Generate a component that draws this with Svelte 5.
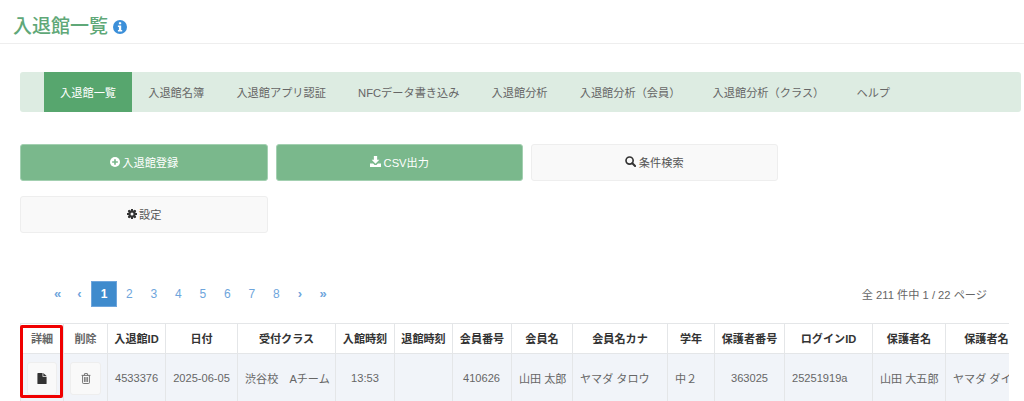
<script>
  const navItems = ['入退館一覧', '入退館名簿', '入退館アプリ認証', 'NFCデータ書き込み', '入退館分析', '入退館分析（会員）', '入退館分析（クラス）', 'ヘルプ'];
  const pages = ['1', '2', '3', '4', '5', '6', '7', '8'];
  const columns = [
    { w: 43, t: '詳細', muted: true },
    { w: 44, t: '削除', muted: true },
    { w: 58, t: '入退館ID', v: '4533376', a: 'c' },
    { w: 72, t: '日付', v: '2025-06-05', a: 'c' },
    { w: 98, t: '受付クラス', v: '渋谷校　Aチーム', a: 'c' },
    { w: 59, t: '入館時刻', v: '13:53', a: 'c' },
    { w: 58, t: '退館時刻', v: '', a: 'c' },
    { w: 59, t: '会員番号', v: '410626', a: 'r' },
    { w: 61, t: '会員名', v: '山田 太郎', a: 'c' },
    { w: 95, t: '会員名カナ', v: 'ヤマダ タロウ', a: 'l' },
    { w: 47, t: '学年', v: '中２', a: 'l' },
    { w: 70, t: '保護者番号', v: '363025', a: 'c' },
    { w: 88, t: 'ログインID', v: '25251919a', a: 'l' },
    { w: 73, t: '保護者名', v: '山田 大五郎', a: 'c' },
    { w: 104, t: '保護者名カナ', v: 'ヤマダ ダイゴロウ', a: 'l' }
  ];
  const gearTeeth = [0, 45, 90, 135, 180, 225, 270, 315];
</script>

<div class="page">
  <header class="head">
    <h1>入退館一覧</h1>
    <svg class="info" viewBox="0 0 14 14" width="14" height="14" aria-hidden="true">
      <circle cx="7" cy="7" r="7" fill="#3b8fd9" />
      <rect x="5.9" y="2.3" width="2.3" height="2" rx=".3" fill="#fff" />
      <path d="M4.9 5.5h3.3v4.4h1v1.5H4.9V9.9h1V7H4.9z" fill="#fff" />
    </svg>
  </header>

  <main class="content">
    <nav class="nav">
      {#each navItems as item, i}
        <span class="tab" class:active={i === 0}>{item}</span>
      {/each}
    </nav>

    <div class="buttons">
      <div class="btn green">
        <svg viewBox="0 0 12 12" width="10" height="10" aria-hidden="true">
          <circle cx="6" cy="6" r="6" fill="#fff" />
          <path d="M5 2.6h2V5h2.4v2H7v2.4H5V7H2.6V5H5z" fill="#7ab88c" />
        </svg>
        <span>入退館登録</span>
      </div>
      <div class="btn green">
        <svg viewBox="0 0 12 12" width="11" height="11" aria-hidden="true">
          <path d="M4.2 0h3.6v4.2h2.4L6 8.4 1.8 4.2h2.4z" fill="#fff" />
          <path d="M0 8.2h3.4L5 9.8h2l1.6-1.6H12V12H0z" fill="#fff" />
        </svg>
        <span>CSV出力</span>
      </div>
      <div class="btn plain">
        <svg viewBox="0 0 12 12" width="11" height="11" aria-hidden="true">
          <circle cx="5" cy="5" r="3.9" fill="none" stroke="#333" stroke-width="1.8" />
          <path d="M8 8l3 3" stroke="#333" stroke-width="2.2" stroke-linecap="round" />
        </svg>
        <span>条件検索</span>
      </div>
      <div class="btn plain first">
        <svg viewBox="0 0 12 12" width="10" height="10" aria-hidden="true">
          {#each gearTeeth as deg}
            <rect x="4.8" y="0" width="2.4" height="12" rx=".3" fill="#333" transform="rotate({deg} 6 6)" />
          {/each}
          <circle cx="6" cy="6" r="4.4" fill="#333" />
          <circle cx="6" cy="6" r="1.8" fill="#f9f9f9" />
        </svg>
        <span>設定</span>
      </div>
    </div>

    <div class="pager-row">
      <div class="pager">
        <span class="pg edge">«</span>
        <span class="pg edge">‹</span>
        {#each pages as p, i}
          <span class="pg" class:current={i === 0}>{p}</span>
        {/each}
        <span class="pg edge">›</span>
        <span class="pg edge">»</span>
      </div>
      <div class="count">全 211 件中 1 / 22 ページ</div>
    </div>

    <div class="table-wrap">
      <table>
        <colgroup>
          {#each columns as c}
            <col style="width:{c.w}px" />
          {/each}
        </colgroup>
        <thead>
          <tr>
            {#each columns as c}
              <th class:muted={c.muted}>{c.t}</th>
            {/each}
          </tr>
        </thead>
        <tbody>
          <tr>
            <td class="act">
              <span class="icon-btn">
                <svg viewBox="0 0 10 12" width="10" height="11" aria-hidden="true">
                  <path d="M0 .6C0 .3.3 0 .6 0H5.6v4h4.4v7.4c0 .3-.3.6-.6.6H.6c-.3 0-.6-.3-.6-.6z" fill="#333" />
                  <path d="M6.4.1 10 3.3H6.4z" fill="#333" />
                </svg>
              </span>
            </td>
            <td class="act">
              <span class="icon-btn wide">
                <svg viewBox="0 0 10 12" width="10" height="11" aria-hidden="true">
                  <path d="M.2 2.6h9.6M3.3 2.4V1.2q0-.7.7-.7h2q.7 0 .7.7v1.2M1.3 2.8v7.8q0 .9.9.9h5.6q.9 0 .9-.9V2.8M3.5 4.4v5.4M5 4.4v5.4M6.5 4.4v5.4" fill="none" stroke="#666" stroke-width="1" />
                </svg>
              </span>
            </td>
            {#each columns.slice(2) as c}
              <td class={c.a}>{c.v}</td>
            {/each}
          </tr>
        </tbody>
      </table>
      <div class="highlight"></div>
    </div>
  </main>
</div>

<style>
  :global(body) {
    margin: 0;
    background: #fff;
  }
  .page {
    height: 401px;
    overflow: hidden;
    font-family: "Liberation Sans", "Noto Sans CJK JP", sans-serif;
    font-size: 11px;
    color: #666;
  }
  .head {
    height: 33px;
    padding: 10px 0 0 13px;
    border-bottom: 1px solid #eeeeee;
    display: flex;
    align-items: center;
    gap: 5px;
  }
  h1 {
    margin: 0;
    font-size: 19px;
    font-weight: 500;
    line-height: 26px;
    color: #5fa878;
  }
  .content {
    padding: 28px 3px 0 20px;
  }
  .nav {
    height: 40px;
    background: #ddece2;
    border-radius: 3px;
    padding-left: 24px;
    display: flex;
  }
  .tab {
    display: flex;
    align-items: center;
    padding: 0 16.1px 1px;
    font-size: 11.2px;
    color: #666;
    white-space: nowrap;
  }
  .tab.active {
    background: #57a66e;
    color: #fff;
  }
  .buttons {
    margin-top: 32px;
    display: grid;
    grid-template-columns: 248px 247px 247px;
    column-gap: 8px;
    row-gap: 15px;
  }
  .btn {
    height: 37px;
    box-sizing: border-box;
    padding-bottom: 2px;
    border-radius: 3px;
    border: 1px solid;
    display: flex;
    align-items: center;
    justify-content: center;
    gap: 2.5px;
    font-size: 11.2px;
  }
  .btn.green {
    background: #7ab88c;
    border-color: #a3d0b1;
    color: #fff;
  }
  .btn.plain {
    background: #f9f9f9;
    border-color: #eeeeee;
    color: #555;
  }
  .pager-row {
    margin-top: 48px;
    height: 26px;
    display: flex;
    align-items: center;
    justify-content: space-between;
    padding: 0 34px 0 25px;
  }
  .pager {
    display: flex;
    align-items: center;
  }
  .pg {
    box-sizing: border-box;
    width: 24.5px;
    height: 26px;
    display: flex;
    align-items: center;
    justify-content: center;
    font-size: 12px;
    color: #6ea5dc;
  }
  .pg.edge {
    width: 23px;
    font-size: 13px;
    font-weight: 700;
    padding-bottom: 1px;
  }
  .pg.edge:first-child {
    padding-left: 2px;
  }
  .pg.current {
    width: 26px;
    background: #3f8bcd;
    border: 1px solid #6ea5dc;
    color: #fff;
    font-weight: 700;
  }
  .count {
    font-size: 11.2px;
    color: #666;
  }
  .table-wrap {
    position: relative;
    margin-top: 16px;
    width: 989px;
    overflow: hidden;
  }
  table {
    table-layout: fixed;
    border-collapse: collapse;
    width: 1029px;
    font-size: 11.1px;
  }
  th, td {
    border: 1px solid #e4e6e8;
    white-space: nowrap;
    overflow: hidden;
    padding: 0 7px 1px;
  }
  th {
    height: 30px;
    box-sizing: border-box;
    color: #333;
    font-weight: 700;
    background: #fff;
    text-align: center;
    padding: 0 0 2px;
  }
  th.muted {
    color: #666;
  }
  td {
    height: 48px;
    background: #f1f4f9;
    color: #666;
  }
  td.c { text-align: center; }
  td.r { text-align: right; padding-right: 11px; }
  td.l { text-align: left; }
  td.act {
    text-align: center;
    padding: 0;
  }
  .icon-btn {
    display: inline-flex;
    align-items: center;
    justify-content: center;
    vertical-align: middle;
    box-sizing: border-box;
    width: 30px;
    height: 33px;
    background: #f9f9f9;
    border: 1px solid #eeeeee;
    border-radius: 3px;
  }
  .icon-btn.wide {
    width: 31px;
  }
  .highlight {
    position: absolute;
    left: 0;
    top: 2px;
    width: 43px;
    height: 73px;
    box-sizing: border-box;
    border: 3px solid #f00000;
    border-radius: 2px;
  }
</style>
